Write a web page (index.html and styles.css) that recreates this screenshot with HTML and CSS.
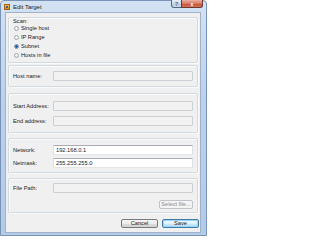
FILE: index.html
```html
<!DOCTYPE html>
<html>
<head>
<meta charset="utf-8">
<title>Edit Target</title>
<link rel="stylesheet" href="styles.css">
</head>
<body>
<div class="window">
  <div class="titlebar">
    <span class="app-icon"><span class="app-icon-core"></span></span>
    <span class="title">Edit Target</span>
    <div class="caption">
      <span class="cap help">?</span>
      <span class="cap close">x</span>
    </div>
  </div>
  <div class="client">
    <div class="group scan">
      <div class="scan-label">Scan:</div>
      <div class="radio"><span class="dot"></span>Single host</div>
      <div class="radio"><span class="dot"></span>IP Range</div>
      <div class="radio"><span class="dot checked"></span>Subnet</div>
      <div class="radio"><span class="dot"></span>Hosts in file</div>
    </div>

    <div class="group g-host">
      <div class="field"><span class="label">Host name:</span><input class="text" disabled></div>
    </div>

    <div class="group g-range">
      <div class="field"><span class="label">Start Address:</span><input class="text" disabled></div>
      <div class="field"><span class="label">End address:</span><input class="text" disabled></div>
    </div>

    <div class="group g-subnet">
      <div class="field"><span class="label">Network:</span><input class="text active" value="192.168.0.1"></div>
      <div class="field"><span class="label">Netmask:</span><input class="text active" value="255.255.255.0"></div>
    </div>

    <div class="group g-file">
      <div class="field"><span class="label">File Path:</span><input class="text" disabled></div>
      <div class="file-actions"><button class="btn btn-select" disabled>Select file...</button></div>
    </div>

    <div class="dialog-actions">
      <button class="btn btn-cancel">Cancel</button>
      <button class="btn btn-save">Save</button>
    </div>
  </div>
</div>
</body>
</html>
```

FILE: styles.css
```css
* { box-sizing: border-box; }

html, body {
  margin: 0;
  padding: 0;
}

body {
  width: 207px;
  height: 236px;
  overflow: hidden;
  font-family: "Liberation Sans", Arial, sans-serif;
  font-size: 5.7px;
  color: #222;
  background: #ffffff;
}

.window {
  width: 207px;
  height: 236px;
  display: flex;
  flex-direction: column;
  background: linear-gradient(#d3e2f3, #bcd2eb 40%, #b2cbe8);
  border: 1px solid #7893b6;
  border-radius: 4px 4px 0 0;
}

/* ---------- title bar ---------- */
.titlebar {
  height: 11px;
  flex: none;
  display: flex;
  align-items: center;
  padding-left: 3px;
}

.app-icon {
  width: 6px;
  height: 6px;
  flex: none;
  background: linear-gradient(#f6c14a, #d9861a);
  border: 1px solid #a5630f;
  display: flex;
  align-items: center;
  justify-content: center;
}

.app-icon-core {
  width: 2px;
  height: 2px;
  background: #3c5f8e;
}

.title {
  margin-left: 3px;
  font-size: 6px;
  line-height: 10px;
  color: #1a1a1a;
}

.caption {
  margin-left: auto;
  margin-right: 3px;
  align-self: flex-start;
  margin-top: -1px;
  display: flex;
}

.cap {
  height: 8px;
  display: flex;
  align-items: center;
  justify-content: center;
  font-size: 5px;
  font-weight: bold;
  line-height: 8px;
  border: 1px solid #56677e;
  border-top: none;
}

.help {
  width: 11px;
  color: #3f5676;
  background: linear-gradient(#e6eef8, #cbd9ea 50%, #b9cbe1 51%, #c7d8ec);
  border-radius: 0 0 0 3px;
}

.close {
  width: 22px;
  margin-left: -1px;
  color: #ffffff;
  background: linear-gradient(#eab0a2, #d97a64 50%, #c54a31 51%, #d5775a);
  border-color: #6b3a34;
  border-radius: 0 0 3px 0;
}

/* ---------- client area ---------- */
.client {
  flex: 1;
  margin: 0 5px 2px 4px;
  background: #f0f0f0;
  border: 1px solid #9fb2c9;
  padding-top: 4px;
  display: flex;
  flex-direction: column;
}

.group {
  margin: 0 2px;
  border: 1px solid #d3dbe2;
  border-radius: 2px;
  box-shadow: inset 1px 1px 0 #fafafa, 1px 1px 0 #fafafa;
  padding: 0 4px;
  display: flex;
  flex-direction: column;
}

.scan {
  padding-top: 0;
  padding-bottom: 2px;
}

.scan-label {
  height: 6px;
  line-height: 6px;
}

.radio {
  height: 9px;
  display: flex;
  align-items: center;
  padding-left: 1px;
  line-height: 9px;
}

.dot {
  width: 5px;
  height: 5px;
  flex: none;
  margin-right: 2px;
  border-radius: 50%;
  border: 1px solid #a4abb2;
  background: radial-gradient(circle at 40% 40%, #fbfbfb, #dfe2e5);
}

.dot.checked {
  border-color: #7f8d9c;
  background: radial-gradient(circle, #1d4f96 0, #2f6ab8 1.2px, #c9d6e4 1.6px, #eef1f4 2.5px);
}

.g-host {
  margin-top: 2px;
  padding-top: 5px;
  padding-bottom: 5px;
}

.g-range {
  margin-top: 6px;
  padding-top: 7px;
  padding-bottom: 6px;
  gap: 5px;
}

.g-subnet {
  margin-top: 5px;
  padding-top: 6px;
  padding-bottom: 4px;
  gap: 3px;
}

.g-file {
  margin-top: 5px;
  padding-top: 4px;
  padding-bottom: 3px;
  gap: 7px;
}

.field {
  display: flex;
  align-items: center;
  height: 10px;
}

.label {
  width: 40px;
  flex: none;
  white-space: nowrap;
  line-height: 10px;
}

.text {
  flex: 1;
  min-width: 0;
  height: 10px;
  margin: 0;
  padding: 0 2px;
  font-family: "Liberation Sans", Arial, sans-serif;
  font-size: 5.7px;
  color: #222;
  border: 1px solid #ccd0d4;
  border-radius: 1px;
  background: #f2f2f2;
  outline: none;
}

.text.active {
  background: #ffffff;
  border-color: #b3b7bd #dde1e6 #e3e6e9 #dde1e6;
  border-top-color: #a9adb3;
}

.file-actions {
  display: flex;
  justify-content: flex-end;
}

.btn {
  height: 9px;
  margin: 0;
  padding: 0;
  font-family: "Liberation Sans", Arial, sans-serif;
  font-size: 5.7px;
  line-height: 7px;
  color: #222;
  border-radius: 2px;
  text-align: center;
}

.btn-select {
  width: 34px;
  color: #8a8a8a;
  border: 1px solid #c0c4c8;
  background: #f4f4f4;
}

.dialog-actions {
  margin-top: 6px;
  margin-right: 1px;
  display: flex;
  justify-content: flex-end;
  gap: 4px;
}

.btn-cancel {
  width: 37px;
  border: 1px solid #7a7a7a;
  background: linear-gradient(#f6f6f6, #ececec 50%, #dedede 51%, #d2d2d2);
}

.btn-save {
  width: 37px;
  border: 1px solid #3d7bad;
  background: linear-gradient(#f0f8fd, #e0f1fb 50%, #c8e7f9 51%, #b6def5);
  box-shadow: inset 0 0 0 1px #9ed3f2;
}
```
